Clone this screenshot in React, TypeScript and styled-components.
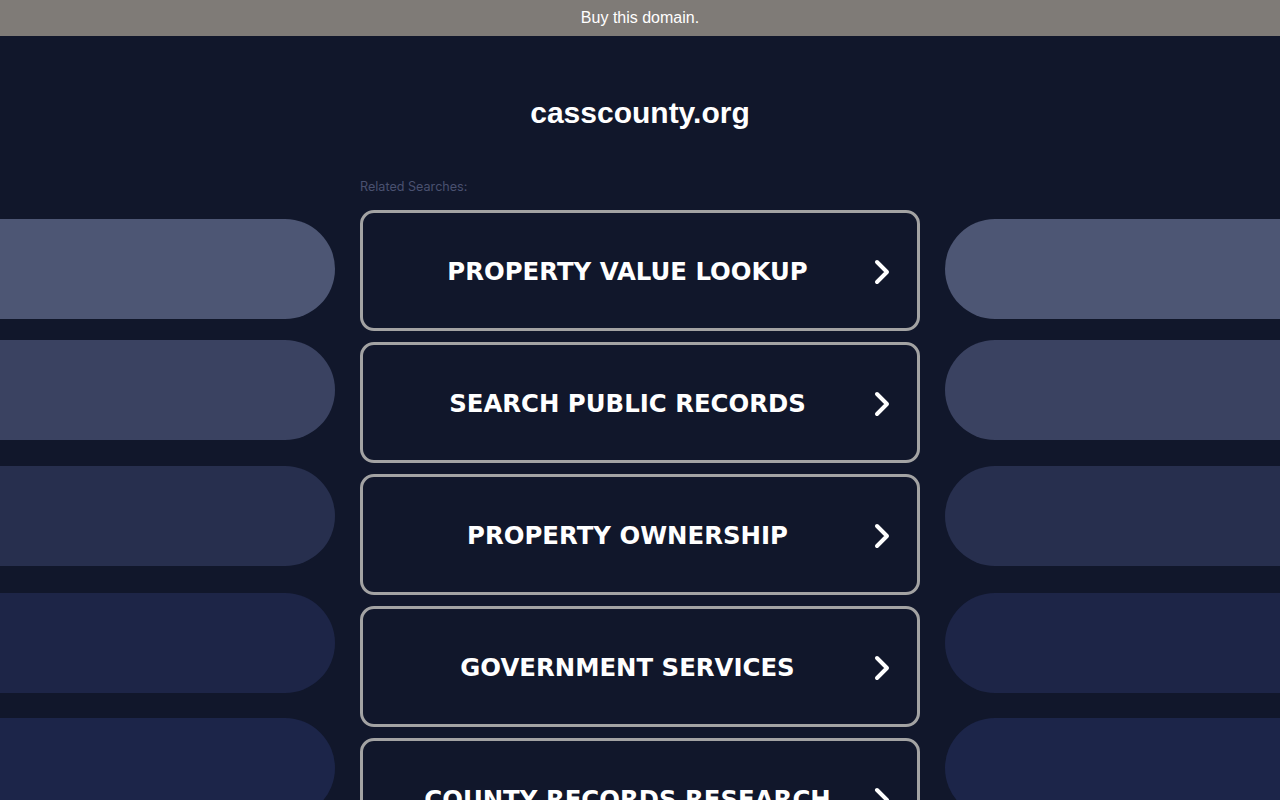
import React from "react";
import styled, { createGlobalStyle } from "styled-components";

const Global = createGlobalStyle`
  html, body { margin: 0; padding: 0; background: #11172b; }
  body { font-family: "Liberation Sans", Arial, sans-serif; overflow: hidden; }
  * { box-sizing: border-box; }
`;

const Page = styled.div`
  width: 1280px;
  height: 800px;
  overflow: hidden;
  background: #11172b;
`;

const TopBar = styled.a`
  display: flex;
  align-items: center;
  justify-content: center;
  height: 36px;
  background: #7f7b77;
  color: #ffffff;
  font-size: 16px;
  text-decoration: none;
`;

const Title = styled.h1`
  margin: 0;
  padding: 59px 0 47px;
  text-align: center;
  color: #ffffff;
  font-size: 30px;
  line-height: 35px;
  font-weight: bold;
`;

const Main = styled.div`
  display: grid;
  grid-template-columns: 335px 560px 335px;
  column-gap: 25px;
`;

const Side = styled.div`
  display: flex;
  flex-direction: column;
  padding-top: 42px;
`;

const Pill = styled.div<{ $side: "left" | "right"; $color: string; $top: number }>`
  height: 100px;
  margin-top: ${(p) => p.$top}px;
  background: ${(p) => p.$color};
  border-radius: ${(p) => (p.$side === "left" ? "0 50px 50px 0" : "50px 0 0 50px")};
  flex-shrink: 0;
`;

const Center = styled.div`
  display: flex;
  flex-direction: column;
`;

const Label = styled.div`
  font-family: Inter, "Open Sans", sans-serif;
  font-size: 12.6px;
  line-height: 20px;
  color: #4a5170;
  margin-bottom: 13px;
`;

const List = styled.div`
  display: flex;
  flex-direction: column;
  gap: 11px;
`;

const Button = styled.a`
  position: relative;
  display: flex;
  align-items: center;
  justify-content: center;
  height: 121px;
  flex-shrink: 0;
  border: 3px solid #a3a3a3;
  border-radius: 14px;
  padding: 2px 25px 0 0;
  color: #ffffff;
  text-decoration: none;
  font-family: "DejaVu Sans", Verdana, sans-serif;
  font-weight: bold;
  font-size: 24.4px;
`;

const Chevron = styled.svg`
  position: absolute;
  right: 26px;
  top: 50%;
  margin-top: -12px;
  width: 18px;
  height: 26px;
`;

const colors = ["#4d5674", "#3a4261", "#272f4e", "#1d2547", "#1c2549"];
const tops = [0, 21, 26, 27, 25];
const items = [
  "PROPERTY VALUE LOOKUP",
  "SEARCH PUBLIC RECORDS",
  "PROPERTY OWNERSHIP",
  "GOVERNMENT SERVICES",
  "COUNTY RECORDS RESEARCH",
];

export default function App() {
  return (
    <Page>
      <Global />
      <TopBar href="#">Buy this domain.</TopBar>
      <Title>casscounty.org</Title>
      <Main>
        <Side>
          {colors.map((c, i) => (
            <Pill key={i} $side="left" $color={c} $top={tops[i]} />
          ))}
        </Side>
        <Center>
          <Label>Related Searches:</Label>
          <List>
            {items.map((t) => (
              <Button key={t} href="#">
                {t}
                <Chevron viewBox="0 0 18 26">
                  <path
                    d="M4 3 L14 13 L4 23"
                    fill="none"
                    stroke="#ffffff"
                    strokeWidth="4"
                    strokeLinecap="round"
                    strokeLinejoin="round"
                  />
                </Chevron>
              </Button>
            ))}
          </List>
        </Center>
        <Side>
          {colors.map((c, i) => (
            <Pill key={i} $side="right" $color={c} $top={tops[i]} />
          ))}
        </Side>
      </Main>
    </Page>
  );
}
